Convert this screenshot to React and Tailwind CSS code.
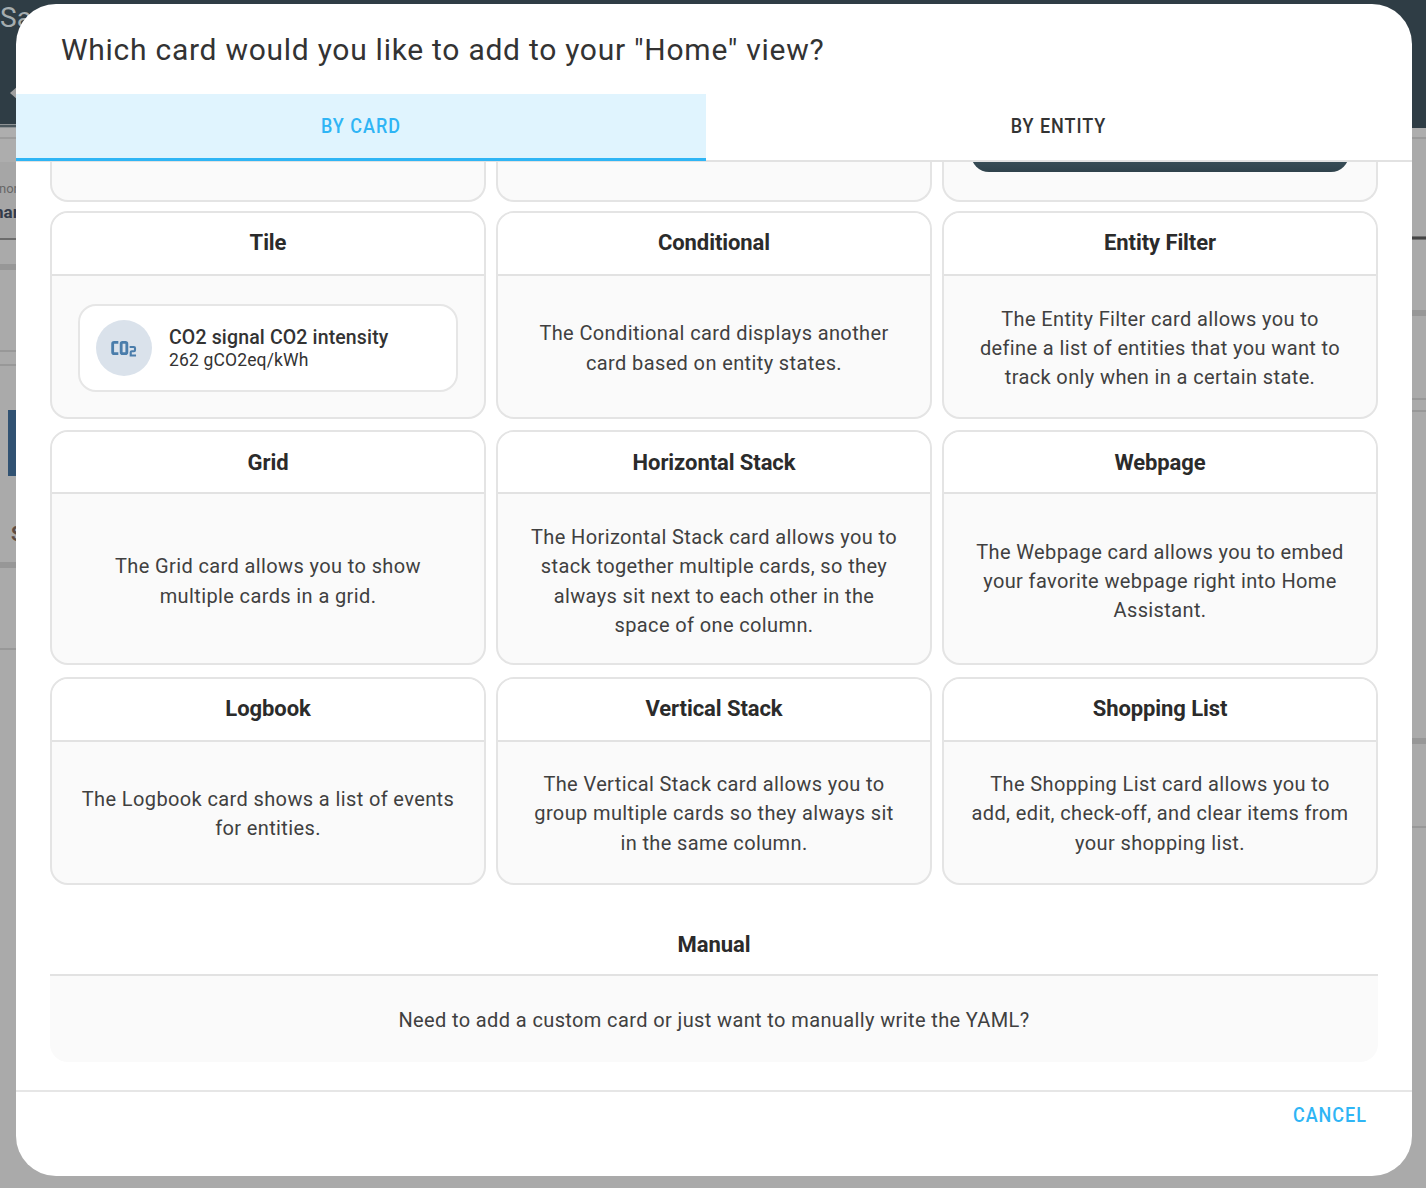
import React from "react";

const rows = [
  {
    grid: "h-[208px] mt-[9px]",
    head: "h-[63px]",
    title: "-translate-y-px",
    body: "pt-[4px]",
    cards: [
      { title: "Tile", tile: true },
      { title: "Conditional", lines: ["The Conditional card displays another", "card based on entity states."] },
      { title: "Entity Filter", lines: ["The Entity Filter card allows you to", "define a list of entities that you want to", "track only when in a certain state."] },
    ],
  },
  {
    grid: "h-[235px] mt-[11px]",
    head: "h-[62px]",
    title: "translate-y-px",
    body: "pt-[6px]",
    cards: [
      { title: "Grid", lines: ["The Grid card allows you to show", "multiple cards in a grid."] },
      { title: "Horizontal Stack", lines: ["The Horizontal Stack card allows you to", "stack together multiple cards, so they", "always sit next to each other in the", "space of one column."] },
      { title: "Webpage", lines: ["The Webpage card allows you to embed", "your favorite webpage right into Home", "Assistant."] },
    ],
  },
  {
    grid: "h-[208px] mt-[12px]",
    head: "h-[63px]",
    title: "-translate-y-px",
    body: "pt-[3px]",
    cards: [
      { title: "Logbook", lines: ["The Logbook card shows a list of events", "for entities."] },
      { title: "Vertical Stack", lines: ["The Vertical Stack card allows you to", "group multiple cards so they always sit", "in the same column."] },
      { title: "Shopping List", lines: ["The Shopping List card allows you to", "add, edit, check-off, and clear items from", "your shopping list."] },
    ],
  },
];

function TilePreview() {
  return (
    <div className="-mt-[2px] flex h-[88px] w-[380px] items-center rounded-[18px] border-2 border-[#e6e6e6] bg-white pl-4">
      <div className="flex size-14 shrink-0 items-center justify-center rounded-full bg-[#dae2eb]">
        <svg viewBox="0 0 24 24" className="size-[34px] fill-[#4a7dab]">
          <path d="M5,7A2,2 0 0,0 3,9V15A2,2 0 0,0 5,17H8V15H5V9H8V7H5M11,7A2,2 0 0,0 9,9V15A2,2 0 0,0 11,17H13A2,2 0 0,0 15,15V9A2,2 0 0,0 13,7H11M11,9H13V15H11V9M16,10.5V12H19V13.5H17.5A1.5,1.5 0 0,0 16,15V18H20.5V16.5H17.5V15H19A1.5,1.5 0 0,0 20.5,13.5V12A1.5,1.5 0 0,0 19,10.5H16Z" />
        </svg>
      </div>
      <div className="ml-[17px] pt-[2px] whitespace-nowrap text-[#333]">
        <div className="text-[19.5px] leading-[22px] font-medium tracking-[0.14px]">CO2 signal CO2 intensity</div>
        <div className="text-[17.5px] leading-[22px] tracking-[0.15px]">262 gCO2eq/kWh</div>
      </div>
    </div>
  );
}

function Card({ card, row }) {
  return (
    <div className="flex flex-col overflow-hidden rounded-[18px] border-2 border-[#e4e4e4] bg-[#fafafa]">
      <div className={"flex shrink-0 items-center justify-center border-b-2 border-[#e2e2e2] bg-white " + row.head}>
        <h3 className={"text-[22px] leading-7 font-bold tracking-[-0.08px] text-[#2b2b2b] " + row.title}>{card.title}</h3>
      </div>
      <div className={"flex flex-1 flex-col items-center justify-center " + row.body}>
        {card.tile ? <TilePreview /> : card.lines.map((l) => (
          <div key={l} className="text-[20px] leading-[29.3px] tracking-[0.38px] whitespace-nowrap text-[#404040]">{l}</div>
        ))}
      </div>
    </div>
  );
}

function Backdrop() {
  return (
    <div className="absolute inset-0 flex justify-between">
      <div className="relative h-full w-20 overflow-hidden bg-[#aaaaaa]">
        <div className="h-[124px] bg-[#2f3d45]" />
        <div className="h-[4px] border-y border-[#8d9294] bg-[#4b575d]" />
        <div className="h-[11px] border-b-2 border-[#9c9c9c] bg-[#aeaeae]" />
        <div className="h-[23px] bg-[#adadad]" />
        <div className="h-[76px] bg-[#a6a6a6]" />
        <div className="absolute top-[2px] left-0 text-[28px] leading-8 text-[#a5adb0]">Sa</div>
        <svg viewBox="0 0 8 14" className="absolute top-[86px] left-[10px] h-[14px] w-2 fill-[#a0a0a0]"><path d="M0 7 8 0V14Z" /></svg>
        <div className="absolute top-[179px] left-[-1px] text-[13px] leading-5 text-[#666]">nor</div>
        <div className="absolute top-[202px] -left-[6px] text-[17px] leading-5 font-bold text-[#333b4a]">nar</div>
        <div className="absolute top-[238px] h-[2px] w-full bg-[#6c6c6c]" />
        <div className="absolute top-[264px] h-[6px] w-full bg-[#979797]" />
        <div className="absolute top-[350px] h-[2px] w-full bg-[#989898]" />
        <div className="absolute top-[364px] h-[2px] w-full bg-[#989898]" />
        <div className="absolute top-[410px] left-2 h-[66px] w-10 bg-[#315272]" />
        <div className="absolute top-[524px] left-[11px] text-[20px] leading-5 font-bold text-[#5f4d43]">S</div>
        <div className="absolute top-[562px] h-[6px] w-full bg-[#979797]" />
        <div className="absolute top-[648px] h-[2px] w-full bg-[#989898]" />
      </div>
      <div className="h-[8px] flex-1 bg-[#2f3d45]" />
      <div className="relative h-full w-20 bg-[#aaaaaa]">
        <div className="h-[128px] bg-[#2f3d45]" />
        <div className="h-[11px] border-b-2 border-[#9a9a9a] bg-[#adadad]" />
        <div className="absolute top-[236px] h-[4px] w-full border-y border-[#707070] bg-[#444]" />
        <div className="absolute top-[310px] h-[6px] w-full bg-[#979797]" />
        <div className="absolute top-[398px] h-[2px] w-full bg-[#989898]" />
        <div className="absolute top-[410px] h-[2px] w-full bg-[#989898]" />
        <div className="absolute top-[738px] h-[6px] w-full bg-[#979797]" />
        <div className="absolute top-[826px] h-[2px] w-full bg-[#989898]" />
      </div>
    </div>
  );
}

export default function App() {
  return (
    <div className="relative h-[1188px] w-[1426px] overflow-hidden bg-[#aaaaaa] pt-1 pl-4 font-['Roboto',sans-serif]">
      <Backdrop />
      <div className="relative flex h-[1172px] w-[1396px] flex-col overflow-hidden rounded-[40px] bg-white">
        <h2 className="h-[90px] shrink-0 pt-[26px] pl-[45px] text-[30px] leading-10 tracking-[0.73px] text-[#333]">
          Which card would you like to add to your "Home" view?
        </h2>
        <div className="flex h-[68px] shrink-0 border-b-2 border-[#e2e2e2] text-[18px] font-medium">
          <div className="-mb-[2px] flex h-[67px] w-[690px] items-center justify-center border-b-[3px] border-[#2fb5f5] bg-[#e0f4fe] text-[#2fb5f5]">
            <span className="-translate-y-px scale-y-[1.08] tracking-[1px]">BY CARD</span>
          </div>
          <div className="flex h-[64px] flex-1 items-center justify-center text-[#333]">
            <span className="-translate-y-px scale-y-[1.08] pr-px tracking-[0.95px]">BY ENTITY</span>
          </div>
        </div>
        <div className="flex h-[928px] shrink-0 flex-col px-[34px]">
          <div className="grid h-[40px] grid-cols-3 gap-[10px]">
            {[0, 1, 2].map((i) => (
              <div key={i} className="flex justify-center rounded-b-[18px] border-2 border-t-0 border-[#e4e4e4] bg-[#fafafa]">
                {i === 2 && (
                  <div className="h-[10px] w-[378px] overflow-hidden">
                    <div className="-mt-[30px] h-10 rounded-b-[18px] bg-linear-to-b from-[#526c78] to-[#2f424b]" />
                  </div>
                )}
              </div>
            ))}
          </div>
          {rows.map((row) => (
            <div key={row.cards[0].title} className={"grid shrink-0 grid-cols-3 gap-[10px] " + row.grid}>
              {row.cards.map((c) => <Card key={c.title} card={c} row={row} />)}
            </div>
          ))}
          <div className="mt-[29px] flex h-[62px] shrink-0 items-center justify-center border-b-2 border-[#e2e2e2]">
            <h3 className="translate-y-px text-[22px] leading-7 font-bold tracking-[-0.08px] text-[#2b2b2b]">Manual</h3>
          </div>
          <div className="flex h-[86px] shrink-0 items-center justify-center rounded-b-[18px] bg-[#fafafa] pt-px text-[20px] tracking-[0.38px] text-[#404040]">
            Need to add a custom card or just want to manually write the YAML?
          </div>
        </div>
        <div className="flex flex-1 justify-end border-t-2 border-[#e6e6e6] pt-[9px] pr-[45px]">
          <button className="h-[27px] scale-y-[1.08] text-[18px] leading-[27px] font-medium tracking-[1px] text-[#2fb5f5]">CANCEL</button>
        </div>
      </div>
    </div>
  );
}
